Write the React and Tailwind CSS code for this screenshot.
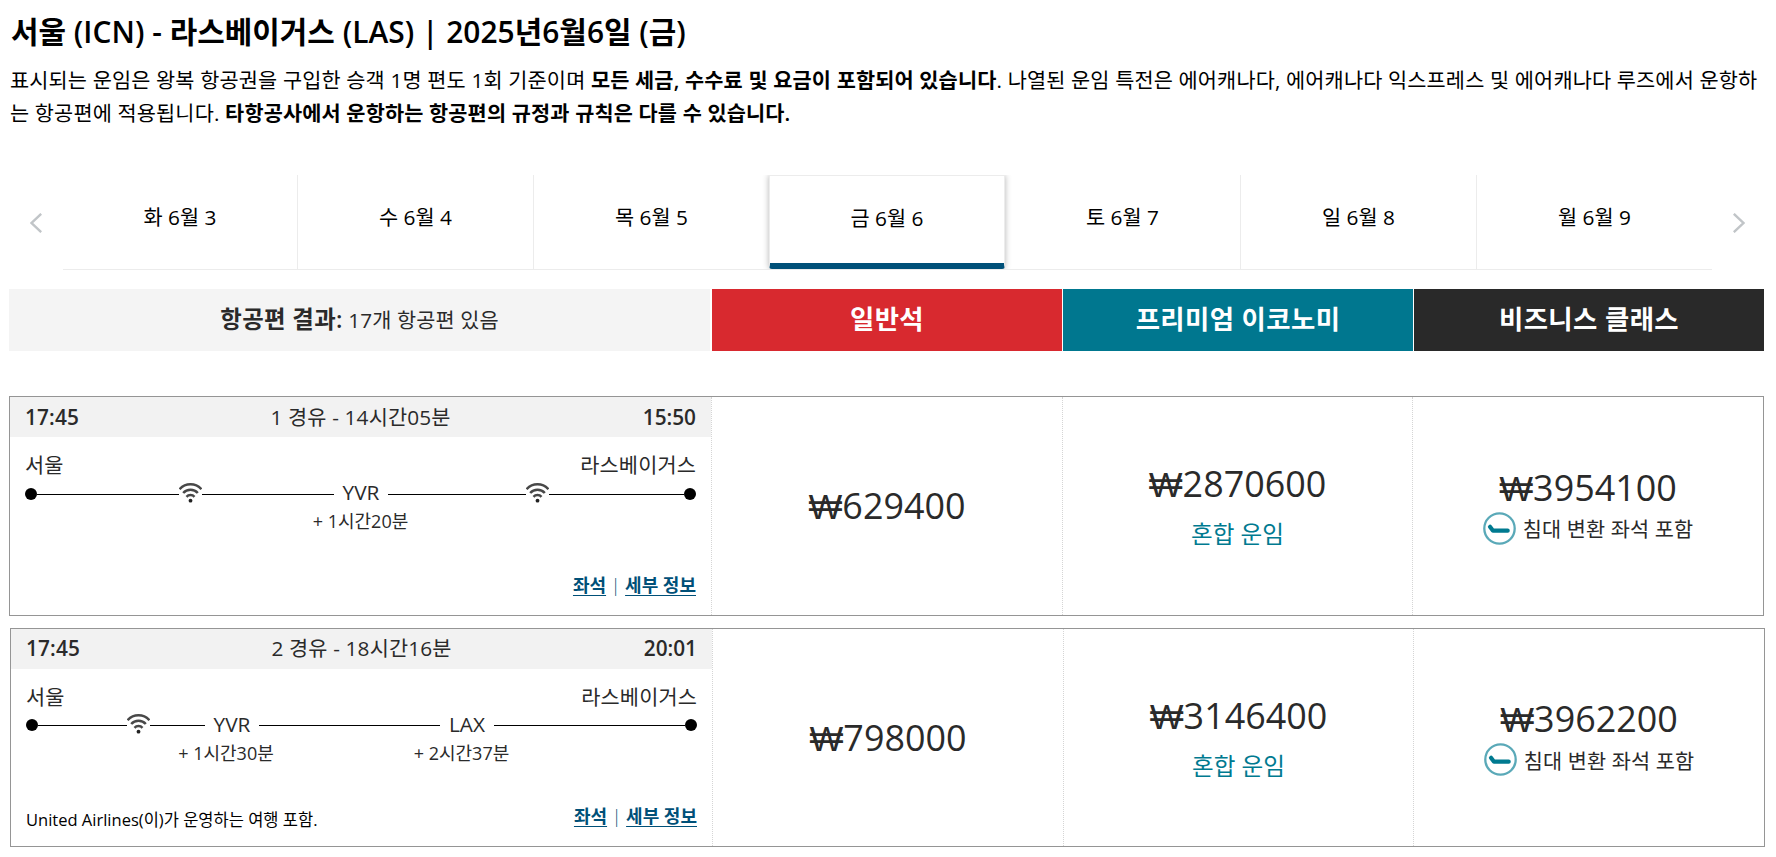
import { Fragment } from 'react';

const days = [
  { label: '화 6월 3' },
  { label: '수 6월 4' },
  { label: '목 6월 5' },
  { label: '금 6월 6', active: true },
  { label: '토 6월 7' },
  { label: '일 6월 8' },
  { label: '월 6월 9' },
];

const flights = [
  {
    depart: '17:45',
    arrive: '15:50',
    summary: '1 경유 - 14시간05분',
    from: '서울',
    to: '라스베이거스',
    track: [
      { line: 142 },
      { wifi: true },
      { line: 132 },
      { stop: 'YVR', wait: '+ 1시간20분', stopClass: 'mt-0', waitClass: 'mr-px' },
      { line: 138 },
      { wifi: true },
      { line: 135 },
    ],
    economy: '₩629400',
    premium: '₩2870600',
    business: '₩3954100',
    box: 'h-[220px]',
    headBox: 'pt-0.5',
    trackBox: 'mt-px',
    economyBox: 'pb-px',
    businessBox: 'pt-[67px]',
    seatBox: 'pt-0.5',
  },
  {
    depart: '17:45',
    arrive: '20:01',
    summary: '2 경유 - 18시간16분',
    from: '서울',
    to: '라스베이거스',
    note: 'United Airlines(이)가 운영하는 여행 포함.',
    track: [
      { line: 89 },
      { wifi: true },
      { line: 55 },
      { stop: 'YVR', wait: '+ 1시간30분', stopClass: 'mt-px', waitClass: 'mr-3' },
      { line: 181 },
      { stop: 'LAX', wait: '+ 2시간37분', stopClass: 'mt-px', waitClass: 'mr-[11px]' },
      { line: 191 },
    ],
    economy: '₩798000',
    premium: '₩3146400',
    business: '₩3962200',
    box: 'ml-px mt-3 h-[219px]',
    headBox: 'pt-0',
    trackBox: 'mt-0',
    economyBox: 'pt-px',
    businessBox: 'pt-[66px]',
    seatBox: 'pt-1 -mb-px',
  },
];

function Chevron({ flip }) {
  return (
    <svg width="12" height="20" viewBox="0 0 12 20" className={flip ? 'rotate-180' : ''} fill="none" stroke="#c1c5c8" strokeWidth="2.4">
      <path d="M11.2 0.8 L1.6 10 L11.2 19.2" />
    </svg>
  );
}

function WifiIcon() {
  return (
    <svg width="23" height="20" viewBox="0 0 23 20" className="mt-[3px] flex-none" fill="none" stroke="#484848" strokeWidth="2.5">
      <path d="M0.6 6.2 C6.5 -0.3 16.5 -0.3 22.4 6.2" />
      <path d="M4.2 10 C8 5.6 15 5.6 18.8 10" />
      <path d="M7.5 13.8 C9.6 11.5 13.4 11.5 15.5 13.8" />
      <circle cx="11.5" cy="17.7" r="1.9" fill="#222222" stroke="none" />
    </svg>
  );
}

function LieFlatIcon() {
  return (
    <svg width="33" height="33" viewBox="0 0 33 33" className="flex-none" fill="none">
      <circle cx="16.5" cy="16.5" r="15.2" stroke="#5aa9b8" strokeWidth="2.3" />
      <path d="M7 14.8 L10 18.7 H24.7" stroke="#007a90" strokeWidth="4.2" strokeLinecap="round" strokeLinejoin="round" />
    </svg>
  );
}

function Track({ items, className }) {
  return (
    <div className={`flex items-start ${className}`}>
      <span className="mt-2 size-3 flex-none rounded-full bg-black" />
      {items.map((item, i) => (
        <Fragment key={i}>
          {item.line && <span className="mt-3.5 h-px flex-none bg-black" style={{ width: item.line }} />}
          {item.wifi && <WifiIcon />}
          {item.stop && (
            <div className={`flex w-[54px] flex-none flex-col items-center whitespace-nowrap leading-6 ${item.stopClass}`}>
              <span>{item.stop}</span>
              <span className={`mt-[5px] text-[18px] ${item.waitClass}`}>{item.wait}</span>
            </div>
          )}
        </Fragment>
      ))}
      <span className="mt-2 size-3 flex-none rounded-full bg-black" />
    </div>
  );
}

function Price({ children }) {
  return <span className="font-['Open_Sans','Liberation_Sans',sans-serif] text-[35.9px] leading-[48px]">{children}</span>;
}

function FlightCard({ flight }) {
  return (
    <article className={`grid w-[1755px] grid-cols-[701px_351px_350px_351px] border border-[#959595] text-[#2a2a2a] ${flight.box}`}>
      <div className="flex flex-col">
        <div className={`grid h-10 grid-cols-[1fr_auto_1fr] items-center bg-[#f2f2f2] px-[15px] ${flight.headBox}`}>
          <span className="font-semibold tracking-[0.15px]">{flight.depart}</span>
          <span className="tracking-[0.15px]">{flight.summary}</span>
          <span className="text-right font-semibold">{flight.arrive}</span>
        </div>
        <div className="flex flex-1 flex-col px-[15px] pb-[18px] pt-3.5">
          <div className="flex justify-between leading-7">
            <span>{flight.from}</span>
            <span className="tracking-[0.15px]">{flight.to}</span>
          </div>
          <Track items={flight.track} className={flight.trackBox} />
          <div className="mt-auto flex items-end justify-between leading-6">
            <span className="-mb-1 text-[16.5px] text-black">{flight.note}</span>
            <div className="flex text-[18px] text-[#005078]">
              <a href="#" className="font-semibold underline underline-offset-[3px]">좌석</a>
              <span className="w-[19px] text-center font-light">|</span>
              <a href="#" className="font-semibold underline underline-offset-[3px]">세부 정보</a>
            </div>
          </div>
        </div>
      </div>
      <div className={`flex items-center justify-center border-l border-dotted border-[#d5d5d5] ${flight.economyBox}`}>
        <Price>{flight.economy}</Price>
      </div>
      <div className="flex flex-col items-center border-l border-dotted border-[#d5d5d5] pt-[63px]">
        <Price>{flight.premium}</Price>
        <span className="mt-2.5 text-[23.6px] leading-8 text-[#007a90]">혼합 운임</span>
      </div>
      <div className={`flex flex-col items-center border-l border-dotted border-[#d5d5d5] ${flight.businessBox}`}>
        <Price>{flight.business}</Price>
        <div className="flex h-[33px] items-center gap-[7px]">
          <LieFlatIcon />
          <span className={`tracking-[0.1px] ${flight.seatBox}`}>침대 변환 좌석 포함</span>
        </div>
      </div>
    </article>
  );
}

export default function App() {
  return (
    <main className="h-[857px] overflow-hidden bg-white pl-[9px] font-['Open_Sans','Noto_Sans_CJK_KR',sans-serif] text-[20.8px] text-black">
      <h1 className="pl-0.5 pt-3 text-[29.9px] font-semibold leading-10 tracking-[0.03px]">서울 (ICN) - 라스베이거스 (LAS) | 2025년6월6일 (금)</h1>
      <p className="mt-3 h-[66px] w-[1757px] break-all pl-px leading-[33px] tracking-[0.15px]">
        표시되는 운임은 왕복 항공권을 구입한 승객 1명 편도 1회 기준이며 <b className="font-semibold">모든 세금, 수수료 및 요금이 포함되어 있습니다</b>. 나열된 운임 특전은 에어캐나다, 에어캐나다 익스프레스 및 에어캐나다 루즈에서 운항하는 항공편에 적용됩니다. <b className="font-semibold">타항공사에서 운항하는 항공편의 규정과 규칙은 다를 수 있습니다.</b>
      </p>

      {/* 날짜 선택 */}
      <div className="mt-[45px] flex h-[95px] w-[1755px]">
        <button className="flex w-[54px] items-center justify-center pt-px"><Chevron /></button>
        <div className="grid grid-cols-[235px_236px_235px_236px_236px_236px_235px] border-b border-[#ececec]">
          {days.map((day, i) =>
            day.active ? (
              <div key={day.label} className="relative rounded-b-[3px] border border-b-[6px] border-[#ececec] border-b-[#005078] bg-white pt-[26px] text-center leading-8 shadow-[0_0_6px_rgba(0,0,0,0.3)] [clip-path:inset(0_-8px_0_-8px)]">
                {day.label}
              </div>
            ) : (
              <div key={day.label} className={`pt-[26px] text-center leading-8 ${i === 2 || i === 6 ? '' : 'border-r border-[#ececec]'}`}>
                {day.label}
              </div>
            )
          )}
        </div>
        <button className="flex w-[52px] items-center justify-center pl-px pt-px"><Chevron flip /></button>
      </div>

      {/* 좌석 등급 */}
      <div className="mt-[19px] flex h-[62px] text-center leading-[61px] text-white">
        <div className="mr-0.5 w-[701px] bg-[#f4f4f4] leading-[60px] text-[#2a2a2a]">
          <b className="text-[23.4px] font-semibold tracking-[0.35px]">항공편 결과:</b> <span className="tracking-[0.1px]">17개 항공편 있음</span>
        </div>
        <div className="mr-px w-[350px] bg-[#d8292f] text-[26.4px] font-semibold tracking-[0.4px]">일반석</div>
        <div className="mr-px w-[350px] bg-[#00778f] text-[26.4px] font-semibold tracking-[0.4px]">프리미엄 이코노미</div>
        <div className="w-[350px] bg-[#292929] text-[26.4px] font-semibold tracking-[0.4px]">비즈니스 클래스</div>
      </div>

      <section className="pt-[45px]">
        {flights.map((flight) => (
          <FlightCard key={flight.business} flight={flight} />
        ))}
      </section>
    </main>
  );
}
